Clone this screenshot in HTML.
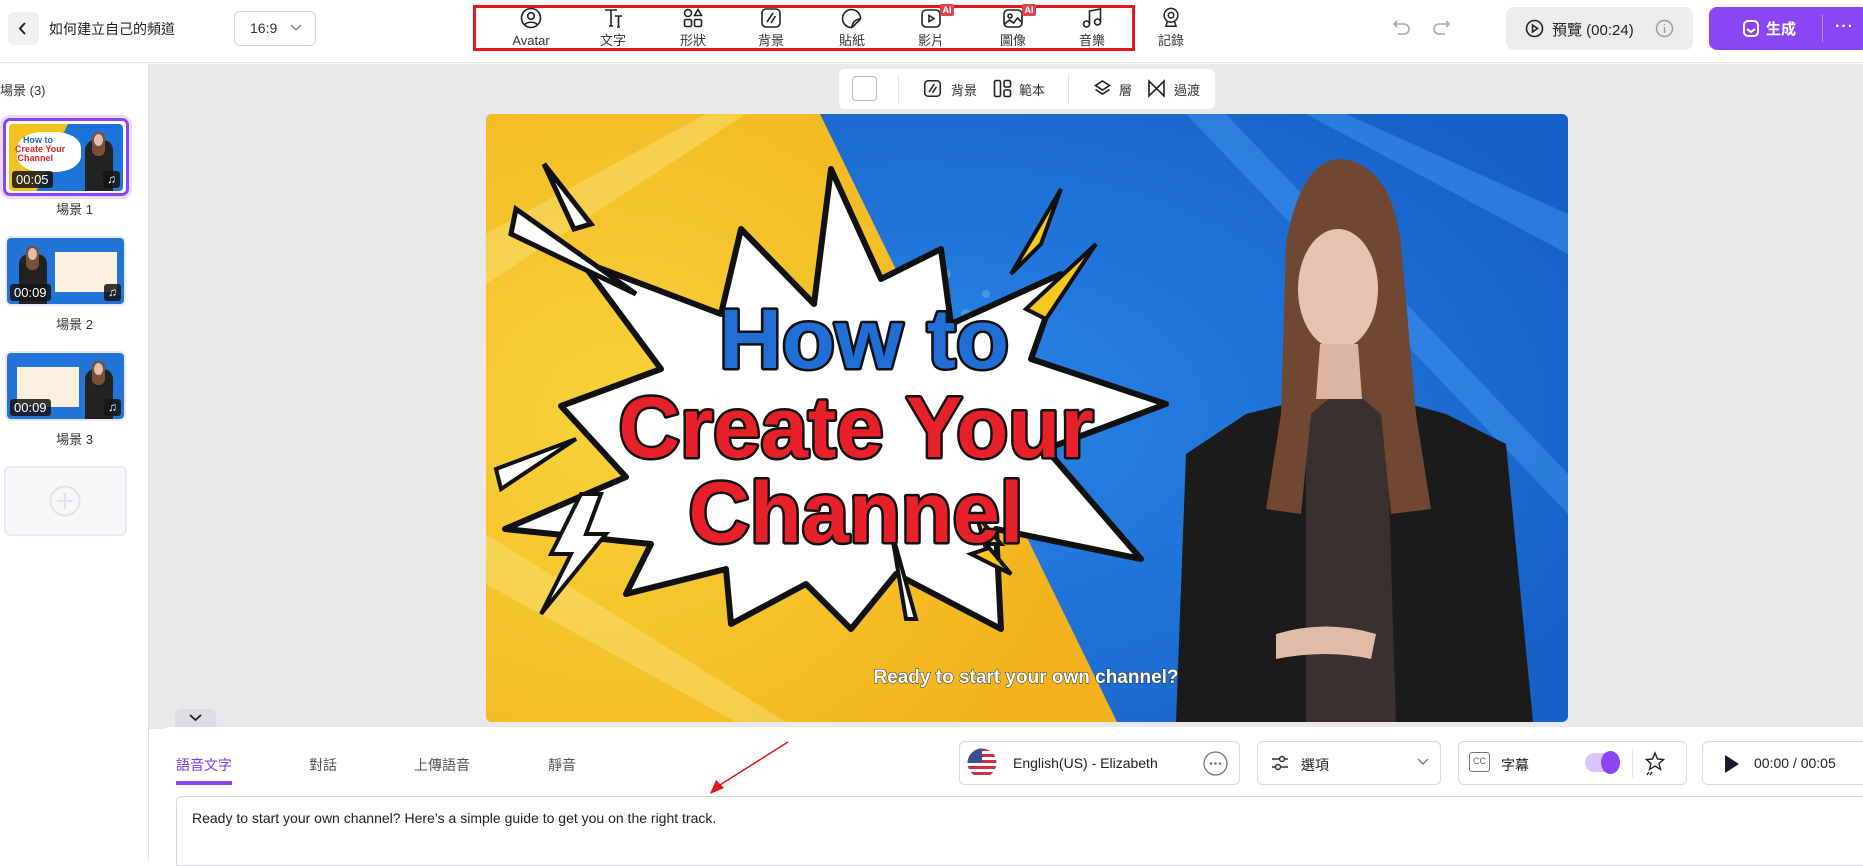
<!DOCTYPE html>
<html><head><meta charset="utf-8">
<style>
*{box-sizing:border-box;margin:0;padding:0}
body{width:1863px;height:861px;overflow:hidden;background:#fff;font-family:"Liberation Sans","Noto Sans CJK TC",sans-serif;color:#222;position:relative}
.abs{position:absolute}
.hdr{left:0;top:0;width:1863px;height:63px;border-bottom:1px solid #e4e4e7;background:#fff}
.tool{position:absolute;top:7px;width:60px;text-align:center;font-size:13px;line-height:16px;color:#333}
.tool svg{display:block;margin:0 auto 4px}
.lbl{font-size:13px;color:#333}
.thumb{position:absolute;left:8px;width:116px;height:67px;border-radius:4px;overflow:hidden}
.tlab{position:absolute;left:0;width:149px;text-align:center;font-size:13px;color:#333}
.time{position:absolute;left:3px;bottom:3px;background:rgba(20,20,20,.85);color:#fff;font-size:13px;padding:1px 4px;border-radius:3px}
.note{position:absolute;right:3px;bottom:3px;width:17px;height:17px;background:rgba(20,20,20,.85);color:#fff;font-size:12px;text-align:center;border-radius:3px;line-height:17px}
.box{position:absolute;top:741px;height:44px;border:1px solid #d9d9de;border-radius:6px;background:#fff}
</style></head><body>

<div class="abs hdr"></div>
<div class="abs" style="left:8px;top:12px;width:31px;height:33px;background:#f0f0f2;border-radius:6px"></div>
<svg class="abs" style="left:16px;top:20px" width="14" height="17" viewBox="0 0 14 17"><path d="M9 3 L4 8.5 L9 14" fill="none" stroke="#222" stroke-width="2"/></svg>
<div class="abs" style="left:49px;top:19px;font-size:14px;color:#222">如何建立自己的頻道</div>
<div class="abs" style="left:234px;top:11px;width:82px;height:35px;border:1px solid #d5d5da;border-radius:6px"></div>
<div class="abs" style="left:250px;top:20px;font-size:14px;color:#333">16:9</div>
<svg class="abs" style="left:290px;top:24px" width="12" height="8"><path d="M1 1 L6 6 L11 1" fill="none" stroke="#777" stroke-width="1.3"/></svg>

<div class="abs" style="left:473px;top:5px;width:662px;height:46px;border:3px solid #e8141c"></div>
<div class="tool" style="left:501px"><svg width="22" height="22" viewBox="0 0 22 22" fill="none" stroke="#222" stroke-width="1.6"><circle cx="11" cy="11" r="9.5"/><circle cx="11" cy="9" r="3.3"/><path d="M5 17.5c2-3 10-3 12 0"/></svg>Avatar</div>
<div class="tool" style="left:583px"><svg width="22" height="22" viewBox="0 0 22 22" fill="none" stroke="#222" stroke-width="1.6"><path d="M3 3h12M9 3v16M7 19h4M13 9h7M16.5 9v11M15 20h3"/></svg>文字</div>
<div class="tool" style="left:663px"><svg width="22" height="22" viewBox="0 0 22 22" fill="none" stroke="#222" stroke-width="1.6"><circle cx="6" cy="6" r="3.5"/><path d="M16 2.5l3.5 6h-7z"/><rect x="2.5" y="12.5" width="7" height="7" rx="1.5"/><rect x="12.5" y="12.5" width="7" height="7" rx="1.5"/></svg>形狀</div>
<div class="tool" style="left:741px"><svg width="22" height="22" viewBox="0 0 22 22" fill="none" stroke="#222" stroke-width="1.6"><rect x="2" y="2" width="18" height="18" rx="4"/><path d="M13 6L7 15M15.5 9L11 16"/></svg>背景</div>
<div class="tool" style="left:822px"><svg width="22" height="22" viewBox="0 0 22 22" fill="none" stroke="#222" stroke-width="1.6"><path d="M19.5 12A9 9 0 1 0 11 20.5M19.5 12l-8.5 8.5M19.5 12c-5 0-8.5 3.5-8.5 8.5"/></svg>貼紙</div>
<div class="tool" style="left:901px"><svg width="22" height="22" viewBox="0 0 22 22" fill="none" stroke="#222" stroke-width="1.6"><rect x="2" y="3" width="18" height="17" rx="4"/><path d="M9 8.5v6l5-3z"/></svg>影片</div>
<div class="abs" style="left:940px;top:4px;width:14px;height:12px;background:#e0474c;color:#fff;font-size:9px;font-weight:bold;text-align:center;line-height:12px;border-radius:2px">AI</div>
<div class="tool" style="left:983px"><svg width="22" height="22" viewBox="0 0 22 22" fill="none" stroke="#222" stroke-width="1.6"><rect x="2" y="3" width="18" height="17" rx="4"/><circle cx="8" cy="9" r="2"/><path d="M2.5 17l5-4 4 3 4-5 4 4"/></svg>圖像</div>
<div class="abs" style="left:1022px;top:4px;width:14px;height:12px;background:#e0474c;color:#fff;font-size:9px;font-weight:bold;text-align:center;line-height:12px;border-radius:2px">AI</div>
<div class="tool" style="left:1062px"><svg width="22" height="22" viewBox="0 0 22 22" fill="none" stroke="#222" stroke-width="1.6"><circle cx="5.5" cy="17" r="3"/><circle cx="16.5" cy="15" r="3"/><path d="M8.5 17V4l11-2v13"/></svg>音樂</div>
<div class="tool" style="left:1141px"><svg width="22" height="22" viewBox="0 0 22 24" fill="none" stroke="#222" stroke-width="1.6"><circle cx="11" cy="9" r="7.5"/><circle cx="11" cy="9" r="3"/><path d="M7 16l-1.5 5h11L15 16"/></svg>記錄</div>

<svg class="abs" style="left:1392px;top:18px" width="20" height="20" viewBox="0 0 20 20" fill="none" stroke="#aaa" stroke-width="1.6"><path d="M5 3L2 6l3 3M2 6h10a5 5 0 0 1 0 10H6"/></svg>
<svg class="abs" style="left:1431px;top:18px" width="20" height="20" viewBox="0 0 20 20" fill="none" stroke="#aaa" stroke-width="1.6"><path d="M15 3l3 3-3 3M18 6H8a5 5 0 0 0 0 10h6"/></svg>

<div class="abs" style="left:1506px;top:7px;width:187px;height:43px;background:#ececee;border-radius:8px"></div>
<svg class="abs" style="left:1525px;top:19px" width="19" height="19" viewBox="0 0 19 19" fill="none" stroke="#222" stroke-width="1.6"><circle cx="9.5" cy="9.5" r="8"/><path d="M7.5 6v7l5-3.5z"/></svg>
<div class="abs" style="left:1552px;top:19px;font-size:15px;color:#222">預覽 (00:24)</div>
<svg class="abs" style="left:1655px;top:19px" width="19" height="19" viewBox="0 0 19 19" fill="none" stroke="#999" stroke-width="1.4"><circle cx="9.5" cy="9.5" r="8"/><path d="M9.5 8v6M9.5 5v1"/></svg>
<div class="abs" style="left:1709px;top:7px;width:160px;height:43px;background:#8b45f5;border-radius:8px"></div>
<svg class="abs" style="left:1742px;top:19px" width="18" height="19" viewBox="0 0 18 19" fill="none" stroke="#fff" stroke-width="2"><rect x="2" y="2" width="14" height="15" rx="4"/><path d="M5 10l4 3 4-3"/></svg>
<div class="abs" style="left:1766px;top:18px;font-size:15px;font-weight:bold;color:#fff">生成</div>
<div class="abs" style="left:1822px;top:15px;width:1px;height:27px;background:#b58cf8"></div>
<div class="abs" style="left:1835px;top:18px;font-size:16px;font-weight:bold;color:#fff;letter-spacing:1px">···</div>

<div class="abs" style="left:148px;top:63px;width:1px;height:798px;background:#e4e4e7"></div>
<div class="abs" style="left:0;top:80px;font-size:13px;color:#333">場景 (3)</div>
<div class="abs" style="left:3px;top:118px;width:126px;height:78px;border:3px solid #8b45f5;border-radius:7px;box-shadow:0 0 0 3px #e9dcfd"></div>
<div class="thumb" style="top:124px;width:114px;height:67px;left:9px;background:linear-gradient(115deg,#f4c21f 40%,#1d74d8 41%)">
 <div style="position:absolute;left:8px;top:8px;width:64px;height:40px;background:#fff;border-radius:40%;"></div>
 <div style="position:absolute;left:14px;top:11px;font-size:9px;font-weight:bold;color:#1d6fd0">How to</div>
 <div style="position:absolute;left:6px;top:21px;font-size:9px;font-weight:bold;color:#e12424;line-height:9px">Create Your<br>&nbsp;Channel</div>
 <div style="position:absolute;left:76px;top:16px;width:28px;height:51px;background:#222;border-radius:10px 10px 0 0"></div>
 <div style="position:absolute;left:83px;top:8px;width:13px;height:24px;background:#7a5038;border-radius:6px"></div>
 <div style="position:absolute;left:85px;top:10px;width:9px;height:12px;background:#e3c0ae;border-radius:50%"></div>
 <div class="time">00:05</div><div class="note">♫</div>
</div>
<div class="tlab" style="top:199px">場景 1</div>
<div class="abs" style="left:5px;top:236px;width:121px;height:70px;border:2px solid #ece6fb;border-radius:6px"></div>
<div class="thumb" style="top:238px;left:7px;width:117px;height:66px;background:#2274d6">
 <div style="position:absolute;left:48px;top:14px;width:62px;height:40px;background:#fbf0dd"></div>
 <div style="position:absolute;left:12px;top:16px;width:28px;height:50px;background:#222;border-radius:10px 10px 0 0"></div>
 <div style="position:absolute;left:19px;top:8px;width:13px;height:24px;background:#7a5038;border-radius:6px"></div>
 <div style="position:absolute;left:21px;top:10px;width:9px;height:12px;background:#e3c0ae;border-radius:50%"></div>
 <div class="time">00:09</div><div class="note">♫</div>
</div>
<div class="tlab" style="top:314px">場景 2</div>
<div class="abs" style="left:5px;top:351px;width:121px;height:70px;border:2px solid #ece6fb;border-radius:6px"></div>
<div class="thumb" style="top:353px;left:7px;width:117px;height:66px;background:#2274d6">
 <div style="position:absolute;left:10px;top:14px;width:62px;height:40px;background:#fbf0dd"></div>
 <div style="position:absolute;left:78px;top:16px;width:28px;height:50px;background:#222;border-radius:10px 10px 0 0"></div>
 <div style="position:absolute;left:85px;top:8px;width:13px;height:24px;background:#7a5038;border-radius:6px"></div>
 <div style="position:absolute;left:87px;top:10px;width:9px;height:12px;background:#e3c0ae;border-radius:50%"></div>
 <div class="time">00:09</div><div class="note">♫</div>
</div>
<div class="tlab" style="top:429px">場景 3</div>
<div class="abs" style="left:4px;top:466px;width:123px;height:70px;border:2px solid #ece6fb;border-radius:6px;background:#f7f7f9"></div>
<svg class="abs" style="left:49px;top:485px" width="32" height="32" viewBox="0 0 32 32" fill="none" stroke="#e2e2e6" stroke-width="2"><circle cx="16" cy="16" r="14.5"/><path d="M16 8v16M8 16h16"/></svg>

<div class="abs" style="left:149px;top:64px;width:1714px;height:665px;background:#e9e9eb"></div>
<div class="abs" style="left:839px;top:69px;width:376px;height:40px;background:#fff;border-radius:6px"></div>
<div class="abs" style="left:852px;top:76px;width:25px;height:25px;border:1px solid #bbb;border-radius:4px"></div>
<div class="abs" style="left:898px;top:74px;width:1px;height:30px;background:#e4e4e7"></div>
<svg class="abs" style="left:923px;top:79px" width="19" height="19" viewBox="0 0 22 22" fill="none" stroke="#222" stroke-width="1.8"><rect x="2" y="2" width="18" height="18" rx="4"/><path d="M13 6L7 15M15.5 9L11 16"/></svg>
<div class="abs lbl" style="left:951px;top:80px">背景</div>
<svg class="abs" style="left:993px;top:79px" width="19" height="19" viewBox="0 0 19 19" fill="none" stroke="#222" stroke-width="1.6"><rect x="1.5" y="1.5" width="6" height="16" rx="1.5"/><rect x="11" y="1.5" width="6.5" height="6.5" rx="1.5"/><rect x="11" y="11" width="6.5" height="6.5" rx="1.5"/></svg>
<div class="abs lbl" style="left:1019px;top:80px">範本</div>
<div class="abs" style="left:1068px;top:74px;width:1px;height:30px;background:#e4e4e7"></div>
<svg class="abs" style="left:1093px;top:79px" width="19" height="19" viewBox="0 0 19 19" fill="none" stroke="#222" stroke-width="1.6"><path d="M9.5 2l7 4.5-7 4.5-7-4.5z"/><path d="M2.5 10.5l7 4.5 7-4.5"/></svg>
<div class="abs lbl" style="left:1119px;top:80px">層</div>
<svg class="abs" style="left:1147px;top:79px" width="19" height="19" viewBox="0 0 19 19" fill="none" stroke="#222" stroke-width="1.6"><path d="M2 2v15l7.5-7.5zM17 2v15L9.5 9.5z"/></svg>
<div class="abs lbl" style="left:1174px;top:80px">過渡</div>

<svg class="abs" style="left:486px;top:114px;border-radius:6px" width="1082" height="608" viewBox="0 0 1082 608">
 <defs>
  <radialGradient id="yg" cx="0.2" cy="0.5" r="0.8"><stop offset="0" stop-color="#f6d23a"/><stop offset="1" stop-color="#f2b21c"/></radialGradient>
  <radialGradient id="bg" cx="0.4" cy="0.5" r="0.7"><stop offset="0" stop-color="#2a86e6"/><stop offset="1" stop-color="#1660c8"/></radialGradient>
 </defs>
 <rect width="1082" height="608" fill="url(#bg)"/>
 <path d="M0 0H334L631 608H0z" fill="url(#yg)"/>
 <g fill="#f8e27a" opacity="0.45"><path d="M0 120L220 0H260L0 170z"/><path d="M0 420L300 608H250L0 470z"/></g>
 <g fill="#3f95ee" opacity="0.5"><path d="M700 0H740L1082 360V400z"/><path d="M1082 100V140L820 0H860z"/></g>
 <g fill="#6fb3f5" opacity="0.5"><circle cx="420" cy="160" r="5"/><circle cx="440" cy="180" r="5"/><circle cx="460" cy="160" r="5"/><circle cx="480" cy="200" r="5"/><circle cx="500" cy="180" r="4"/><circle cx="420" cy="220" r="4"/></g>
 <path d="M19 415L140 363L75 292L175 255L95 147L235 200L255 115L328 190L345 55L395 165L455 135L465 210L575 160L545 245L680 290L560 335L655 445L510 415L515 515L410 460L365 515L320 470L245 510L240 455L140 480L165 430z" fill="#fff" stroke="#111" stroke-width="6" stroke-linejoin="round"/>
 <path d="M58 50L105 110L88 115z" fill="#fff" stroke="#111" stroke-width="5"/>
 <path d="M30 95L150 180L25 120z" fill="#fff" stroke="#111" stroke-width="5"/>
 <path d="M525 160L575 75L555 130z" fill="#f6c81e" stroke="#111" stroke-width="4"/>
 <path d="M540 195L610 130L560 205z" fill="#f6c81e" stroke="#111" stroke-width="4"/>
 <path d="M10 355L90 325L15 375z" fill="#fff" stroke="#111" stroke-width="4"/>
 <path d="M95 380L65 440L85 440L55 500L120 420L100 420L115 380z" fill="#fff" stroke="#111" stroke-width="4"/>
 <path d="M490 400L515 430L500 430L525 460L485 440L500 435z" fill="#f6c81e" stroke="#111" stroke-width="4"/>
 <path d="M405 415L430 505L420 505z" fill="#fff" stroke="#111" stroke-width="4"/>
 <g font-family="Liberation Sans,sans-serif" font-weight="bold" text-anchor="middle" stroke="#111" stroke-width="5" paint-order="stroke" stroke-linejoin="round">
  <text x="378" y="254" font-size="84" fill="#1f6fd6" textLength="290" lengthAdjust="spacingAndGlyphs">How to</text>
  <text x="370" y="343" font-size="86" fill="#e8202a" textLength="475" lengthAdjust="spacingAndGlyphs">Create Your</text>
  <text x="370" y="428" font-size="86" fill="#e8202a" textLength="335" lengthAdjust="spacingAndGlyphs">Channel</text>
 </g>
 <!-- person -->
 <path d="M690 608L700 340L760 300L820 285L905 285L960 300L1020 330L1047 608z" fill="#1b1b1c"/>
 <path d="M820 285L900 285L910 608H820z" fill="#3a302f"/>
 <path d="M800 130Q815 45 855 45Q905 50 915 130L930 300L945 395L905 400L895 300L860 270L825 300L815 400L780 395L795 300z" fill="#6f4733"/>
 <ellipse cx="852" cy="175" rx="40" ry="60" fill="#e6c3b0"/>
 <path d="M834 230L872 230L876 285H830z" fill="#dcb5a2"/>
 <path d="M810 105Q850 60 905 110L900 130Q855 95 815 135z" fill="#6f4733"/>
 <path d="M790 520Q840 505 890 520L885 545Q840 535 790 545z" fill="#e0bca8"/>
 <text x="540" y="569" font-family="Liberation Sans,sans-serif" font-weight="bold" font-size="19" fill="#fff" text-anchor="middle" stroke="#333" stroke-width="1" paint-order="stroke">Ready to start your own channel?</text>
</svg>

<div class="abs" style="left:175px;top:709px;width:41px;height:20px;background:#dedee2;border-radius:6px 6px 0 0"></div>
<svg class="abs" style="left:188px;top:713px" width="15" height="10"><path d="M2 2L7.5 7L13 2" fill="none" stroke="#222" stroke-width="1.8"/></svg>

<div class="abs" style="left:160px;top:727px;width:1703px;height:134px;background:#fff;border-radius:10px 0 0 0"></div>
<div class="abs" style="left:176px;top:755px;font-size:14px;color:#7c3aed">語音文字</div>
<div class="abs" style="left:176px;top:781px;width:56px;height:4px;background:#8b45f5"></div>
<div class="abs" style="left:309px;top:755px;font-size:14px;color:#555">對話</div>
<div class="abs" style="left:414px;top:755px;font-size:14px;color:#555">上傳語音</div>
<div class="abs" style="left:548px;top:755px;font-size:14px;color:#555">靜音</div>

<svg class="abs" style="left:700px;top:740px" width="90" height="56"><path d="M88 2L12 50" stroke="#e8141c" stroke-width="1.5"/><path d="M10 54L16 40L24 48z" fill="#e8141c"/></svg>

<div class="box" style="left:959px;width:281px"></div>
<svg class="abs" style="left:967px;top:748px" width="30" height="30" viewBox="0 0 30 30"><defs><clipPath id="c"><circle cx="15" cy="15" r="14.5"/></clipPath></defs><g clip-path="url(#c)"><rect width="30" height="30" fill="#fff"/><g fill="#c8323e"><rect y="0" width="30" height="3"/><rect y="6" width="30" height="3"/><rect y="12" width="30" height="3"/><rect y="18" width="30" height="3"/><rect y="24" width="30" height="3"/></g><rect width="15" height="15" fill="#3c4f8e"/></g></svg>
<div class="abs" style="left:1013px;top:755px;font-size:14px;color:#222">English(US) - Elizabeth</div>
<svg class="abs" style="left:1203px;top:751px" width="25" height="25" viewBox="0 0 25 25" fill="none" stroke="#777" stroke-width="1.3"><circle cx="12.5" cy="12.5" r="11.5"/><g fill="#777" stroke="none"><circle cx="8" cy="12.5" r="1.3"/><circle cx="12.5" cy="12.5" r="1.3"/><circle cx="17" cy="12.5" r="1.3"/></g></svg>

<div class="box" style="left:1257px;width:184px"></div>
<svg class="abs" style="left:1270px;top:753px" width="20" height="20" viewBox="0 0 20 20" fill="none" stroke="#333" stroke-width="1.4"><path d="M2 6h7M15 6h3M2 14h3M11 14h7"/><circle cx="12" cy="6" r="2.5"/><circle cx="8" cy="14" r="2.5"/></svg>
<div class="abs" style="left:1301px;top:755px;font-size:14px;color:#222">選項</div>
<svg class="abs" style="left:1417px;top:758px" width="12" height="8"><path d="M1 1L6 6L11 1" fill="none" stroke="#777" stroke-width="1.3"/></svg>

<div class="box" style="left:1458px;width:229px"></div>
<div class="abs" style="left:1469px;top:752px;width:21px;height:20px;border:1.5px solid #777;border-radius:3px;font-size:9px;color:#666;text-align:center;line-height:17px">CC</div>
<div class="abs" style="left:1501px;top:755px;font-size:14px;color:#222">字幕</div>
<div class="abs" style="left:1585px;top:753px;width:35px;height:19px;background:#d9c5fb;border-radius:10px"></div>
<div class="abs" style="left:1601px;top:751px;width:19px;height:23px;background:#8b45f5;border-radius:50%"></div>
<div class="abs" style="left:1632px;top:748px;width:1px;height:30px;background:#e4e4e7"></div>
<svg class="abs" style="left:1644px;top:751px" width="22" height="25" viewBox="0 0 22 25" fill="none" stroke="#222" stroke-width="1.4"><path d="M11 2l2.5 6 6 .5-4.5 4 1.5 6-5.5-3.5-5.5 3.5 1.5-6-4.5-4 6-.5z"/><path d="M5 21l-2 3M8 21l-2 3"/></svg>

<div class="box" style="left:1702px;width:180px"></div>
<svg class="abs" style="left:1724px;top:754px" width="16" height="20"><path d="M1 1L15 10L1 19z" fill="#1a1a2e"/></svg>
<div class="abs" style="left:1754px;top:755px;font-size:14px;color:#222">00:00 / 00:05</div>

<div class="abs" style="left:176px;top:796px;width:1700px;height:70px;border:1px solid #d5d5da;border-radius:6px 0 0 0"></div>
<div class="abs" style="left:192px;top:810px;font-size:14px;color:#222">Ready to start your own channel? Here’s a simple guide to get you on the right track.</div>
</body></html>
